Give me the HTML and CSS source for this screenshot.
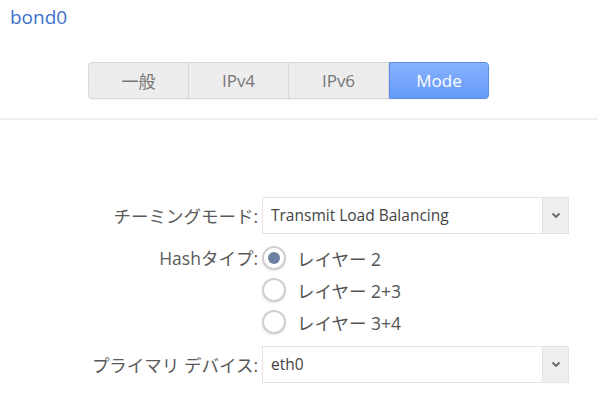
FILE: index.html
```html
<!DOCTYPE html>
<html lang="ja">
<head>
    <meta charset="UTF-8">
    <meta name="viewport" content="width=device-width, initial-scale=1.0">
    <title>bond0</title>
    <link rel="stylesheet" href="styles.css">
</head>
<body>
    <div class="header">
        <h1 class="title">bond0</h1>
    </div>

    <div class="tab-bar">
        <div class="tabs">
            <button class="tab">一般</button>
            <button class="tab">IPv4</button>
            <button class="tab">IPv6</button>
            <button class="tab active">Mode</button>
        </div>
    </div>

    <div class="form">
        <label class="form-label">チーミングモード:</label>
        <div class="select">
            <span class="select-value">Transmit Load Balancing</span>
            <span class="select-arrow">
                <svg width="10" height="7" viewBox="0 0 10 7"><path d="M1.5 1.5 L5 5 L8.5 1.5" fill="none" stroke="#666" stroke-width="1.8"/></svg>
            </span>
        </div>

        <label class="form-label top">Hashタイプ:</label>
        <div class="radio-group">
            <label class="radio-row"><span class="radio checked"></span>レイヤー 2</label>
            <label class="radio-row"><span class="radio"></span>レイヤー 2+3</label>
            <label class="radio-row"><span class="radio"></span>レイヤー 3+4</label>
        </div>

        <label class="form-label">プライマリ デバイス:</label>
        <div class="select">
            <span class="select-value">eth0</span>
            <span class="select-arrow">
                <svg width="10" height="7" viewBox="0 0 10 7"><path d="M1.5 1.5 L5 5 L8.5 1.5" fill="none" stroke="#666" stroke-width="1.8"/></svg>
            </span>
        </div>
    </div>
</body>
</html>
```

FILE: styles.css
```css
body {
    font-family: "Open Sans", "Noto Sans CJK JP", sans-serif;
    margin: 0;
    padding: 0;
    color: #555;
    background-color: #fff;
}

.header {
    padding: 4px 10px 0;
    height: 31px;
}

.title {
    margin: 0;
    font-size: 19px;
    font-weight: normal;
    color: #3d6fcc;
    line-height: 27px;
}

.tab-bar {
    padding: 27px 0 19px 88px;
    border-bottom: 2px solid #efefef;
}

.tabs {
    display: inline-flex;
    border: 1px solid #d8d8d8;
    border-radius: 4px;
    background-color: #ededed;
    box-shadow: 0 1px 1px rgba(0, 0, 0, 0.05);
}

.tab {
    width: 100px;
    height: 35px;
    border: none;
    border-right: 1px solid #d8d8d8;
    background-color: transparent;
    color: #777;
    font-family: inherit;
    font-size: 17px;
    padding: 0;
}

.tab.active {
    border: 1px solid #5a8ee8;
    margin: -1px -1px -1px 0;
    height: 37px;
    border-radius: 0 4px 4px 0;
    background: linear-gradient(#86b1ff, #669bf8);
    color: #fff;
}

.form {
    display: grid;
    grid-template-columns: 258px 307px;
    column-gap: 4px;
    row-gap: 8px;
    padding-top: 77px;
}

.form-label {
    text-align: right;
    font-size: 17.5px;
    align-self: center;
    white-space: nowrap;
    color: #5a5a5a;
}

.form-label.top {
    align-self: start;
    line-height: 32px;
}

.select {
    display: flex;
    height: 35px;
    border: 1px solid #e3e3e3;
    background-color: #fff;
}

.select-value {
    flex: 1;
    padding-left: 8px;
    font-size: 15.5px;
    line-height: 35px;
    color: #444;
}

.select-arrow {
    width: 25px;
    display: flex;
    align-items: center;
    justify-content: center;
    background-color: #efefef;
    border-left: 1px solid #e3e3e3;
}

.radio-group {
    display: flex;
    flex-direction: column;
}

.radio-row {
    display: flex;
    align-items: center;
    height: 32px;
    font-size: 17.5px;
}

.radio {
    box-sizing: border-box;
    width: 24px;
    height: 24px;
    margin-right: 11px;
    border: 2px solid #d0d0d0;
    border-radius: 50%;
    background-color: #fff;
    box-shadow: 0 1px 2px rgba(0, 0, 0, 0.12);
    display: flex;
    align-items: center;
    justify-content: center;
}

.radio.checked::after {
    content: "";
    width: 12px;
    height: 12px;
    border-radius: 50%;
    background-color: #6d7fa3;
}
```
